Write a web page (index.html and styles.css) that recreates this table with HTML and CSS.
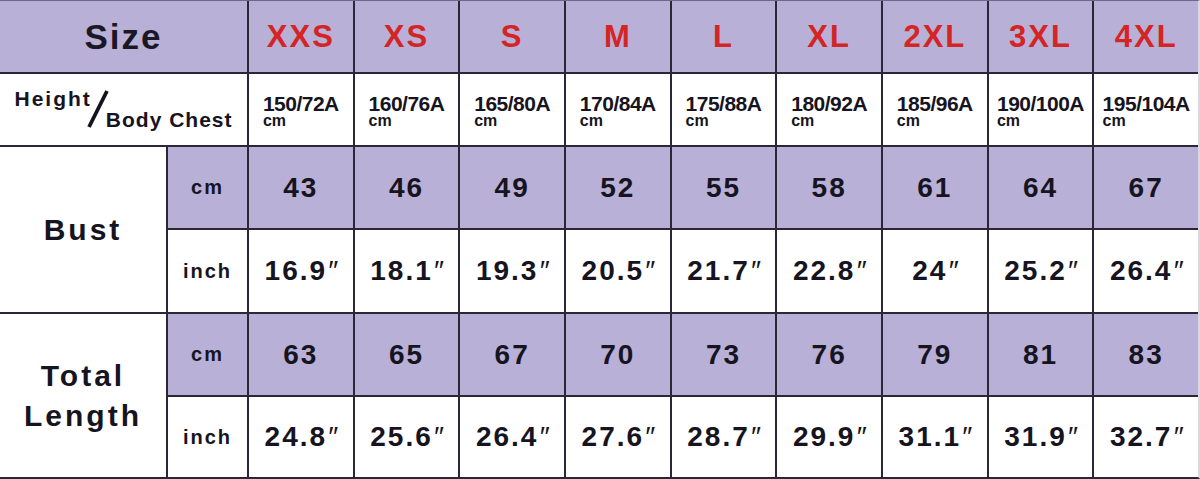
FILE: index.html
```html
<!DOCTYPE html>
<html>
<head>
<meta charset="utf-8">
<link rel="stylesheet" href="styles.css">
</head>
<body>
<div class="chart">
  <div class="cell head size-title span2">Size</div>
  <div class="cell head size">XXS</div>
  <div class="cell head size">XS</div>
  <div class="cell head size">S</div>
  <div class="cell head size">M</div>
  <div class="cell head size">L</div>
  <div class="cell head size">XL</div>
  <div class="cell head size">2XL</div>
  <div class="cell head size">3XL</div>
  <div class="cell head size">4XL</div>

  <div class="cell white span2 hb">
    <div class="hb-inner">
      <span class="hb-height">Height</span>
      <svg class="hb-slash" width="24" height="40" viewBox="0 0 24 40"><line x1="3" y1="38" x2="21" y2="2" stroke="#141220" stroke-width="3.8"/></svg>
      <span class="hb-body">Body Chest</span>
    </div>
  </div>
  <div class="cell white spec"><div class="spec-inner"><span class="spec-num">150/72A</span><span class="spec-unit">cm</span></div></div>
  <div class="cell white spec"><div class="spec-inner"><span class="spec-num">160/76A</span><span class="spec-unit">cm</span></div></div>
  <div class="cell white spec"><div class="spec-inner"><span class="spec-num">165/80A</span><span class="spec-unit">cm</span></div></div>
  <div class="cell white spec"><div class="spec-inner"><span class="spec-num">170/84A</span><span class="spec-unit">cm</span></div></div>
  <div class="cell white spec"><div class="spec-inner"><span class="spec-num">175/88A</span><span class="spec-unit">cm</span></div></div>
  <div class="cell white spec"><div class="spec-inner"><span class="spec-num">180/92A</span><span class="spec-unit">cm</span></div></div>
  <div class="cell white spec"><div class="spec-inner"><span class="spec-num">185/96A</span><span class="spec-unit">cm</span></div></div>
  <div class="cell white spec"><div class="spec-inner"><span class="spec-num">190/100A</span><span class="spec-unit">cm</span></div></div>
  <div class="cell white spec"><div class="spec-inner"><span class="spec-num">195/104A</span><span class="spec-unit">cm</span></div></div>

  <div class="cell white label span-rows">Bust</div>
  <div class="cell purple unit">cm</div>
  <div class="cell purple num">43</div>
  <div class="cell purple num">46</div>
  <div class="cell purple num">49</div>
  <div class="cell purple num">52</div>
  <div class="cell purple num">55</div>
  <div class="cell purple num">58</div>
  <div class="cell purple num">61</div>
  <div class="cell purple num">64</div>
  <div class="cell purple num">67</div>

  <div class="cell white unit">inch</div>
  <div class="cell white num">16.9<span class="q">″</span></div>
  <div class="cell white num">18.1<span class="q">″</span></div>
  <div class="cell white num">19.3<span class="q">″</span></div>
  <div class="cell white num">20.5<span class="q">″</span></div>
  <div class="cell white num">21.7<span class="q">″</span></div>
  <div class="cell white num">22.8<span class="q">″</span></div>
  <div class="cell white num">24<span class="q">″</span></div>
  <div class="cell white num">25.2<span class="q">″</span></div>
  <div class="cell white num">26.4<span class="q">″</span></div>

  <div class="cell white label span-rows">Total<br>Length</div>
  <div class="cell purple unit">cm</div>
  <div class="cell purple num">63</div>
  <div class="cell purple num">65</div>
  <div class="cell purple num">67</div>
  <div class="cell purple num">70</div>
  <div class="cell purple num">73</div>
  <div class="cell purple num">76</div>
  <div class="cell purple num">79</div>
  <div class="cell purple num">81</div>
  <div class="cell purple num">83</div>

  <div class="cell white unit">inch</div>
  <div class="cell white num">24.8<span class="q">″</span></div>
  <div class="cell white num">25.6<span class="q">″</span></div>
  <div class="cell white num">26.4<span class="q">″</span></div>
  <div class="cell white num">27.6<span class="q">″</span></div>
  <div class="cell white num">28.7<span class="q">″</span></div>
  <div class="cell white num">29.9<span class="q">″</span></div>
  <div class="cell white num">31.1<span class="q">″</span></div>
  <div class="cell white num">31.9<span class="q">″</span></div>
  <div class="cell white num">32.7<span class="q">″</span></div>
</div>
</body>
</html>
```

FILE: styles.css
```css
html, body {
  margin: 0;
  padding: 0;
  background: #ffffff;
}

.chart {
  width: 1200px;
  height: 479px;
  box-sizing: border-box;
  display: grid;
  grid-template-columns: 166px 79px repeat(9, 1fr);
  grid-template-rows: 71px 71px 81px 82px 81px 80px;
  gap: 2px;
  background: #2a2737;
  border-top: 1px solid #6e6789;
  border-bottom: 2px solid #2a2737;
  border-right: 2px solid #d9d8de;
  font-family: "Liberation Sans", "DejaVu Sans", Arial, sans-serif;
  font-weight: bold;
  color: #161420;
}

.cell {
  display: flex;
  align-items: center;
  justify-content: center;
  text-align: center;
}

.span2 {
  grid-column: span 2;
}

.span-rows {
  grid-row: span 2;
}

.head {
  background: #b8b0d7;
}

.purple {
  background: #b8b0d7;
}

.white {
  background: #ffffff;
}

.size-title {
  font-size: 35px;
  letter-spacing: 2px;
  color: #1b1826;
}

.size {
  font-size: 31px;
  letter-spacing: 2px;
  color: #d42424;
}

.hb-inner {
  display: flex;
  align-items: stretch;
  height: 40px;
  margin-top: -1px;
}

.hb-height {
  font-size: 21px;
  letter-spacing: 2px;
  line-height: 19px;
  align-self: flex-start;
}

.hb-slash {
  margin: 0 -4px 0 -6px;
  align-self: center;
}

.hb-body {
  font-size: 21px;
  letter-spacing: 1px;
  line-height: 19px;
  align-self: flex-end;
}

.spec-inner {
  display: flex;
  flex-direction: column;
  align-items: flex-start;
  text-align: left;
  padding-top: 1px;
}

.spec-num {
  font-size: 21px;
  line-height: 19px;
  letter-spacing: -0.5px;
}

.spec-unit {
  font-size: 16px;
  line-height: 12px;
  margin-top: 2px;
}

.label {
  font-size: 30px;
  letter-spacing: 3px;
  line-height: 40px;
}

.unit {
  font-size: 20px;
  letter-spacing: 2px;
}

.num {
  font-size: 28px;
  letter-spacing: 2px;
}

.q {
  font-weight: normal;
  font-style: italic;
  letter-spacing: 0;
}
```
